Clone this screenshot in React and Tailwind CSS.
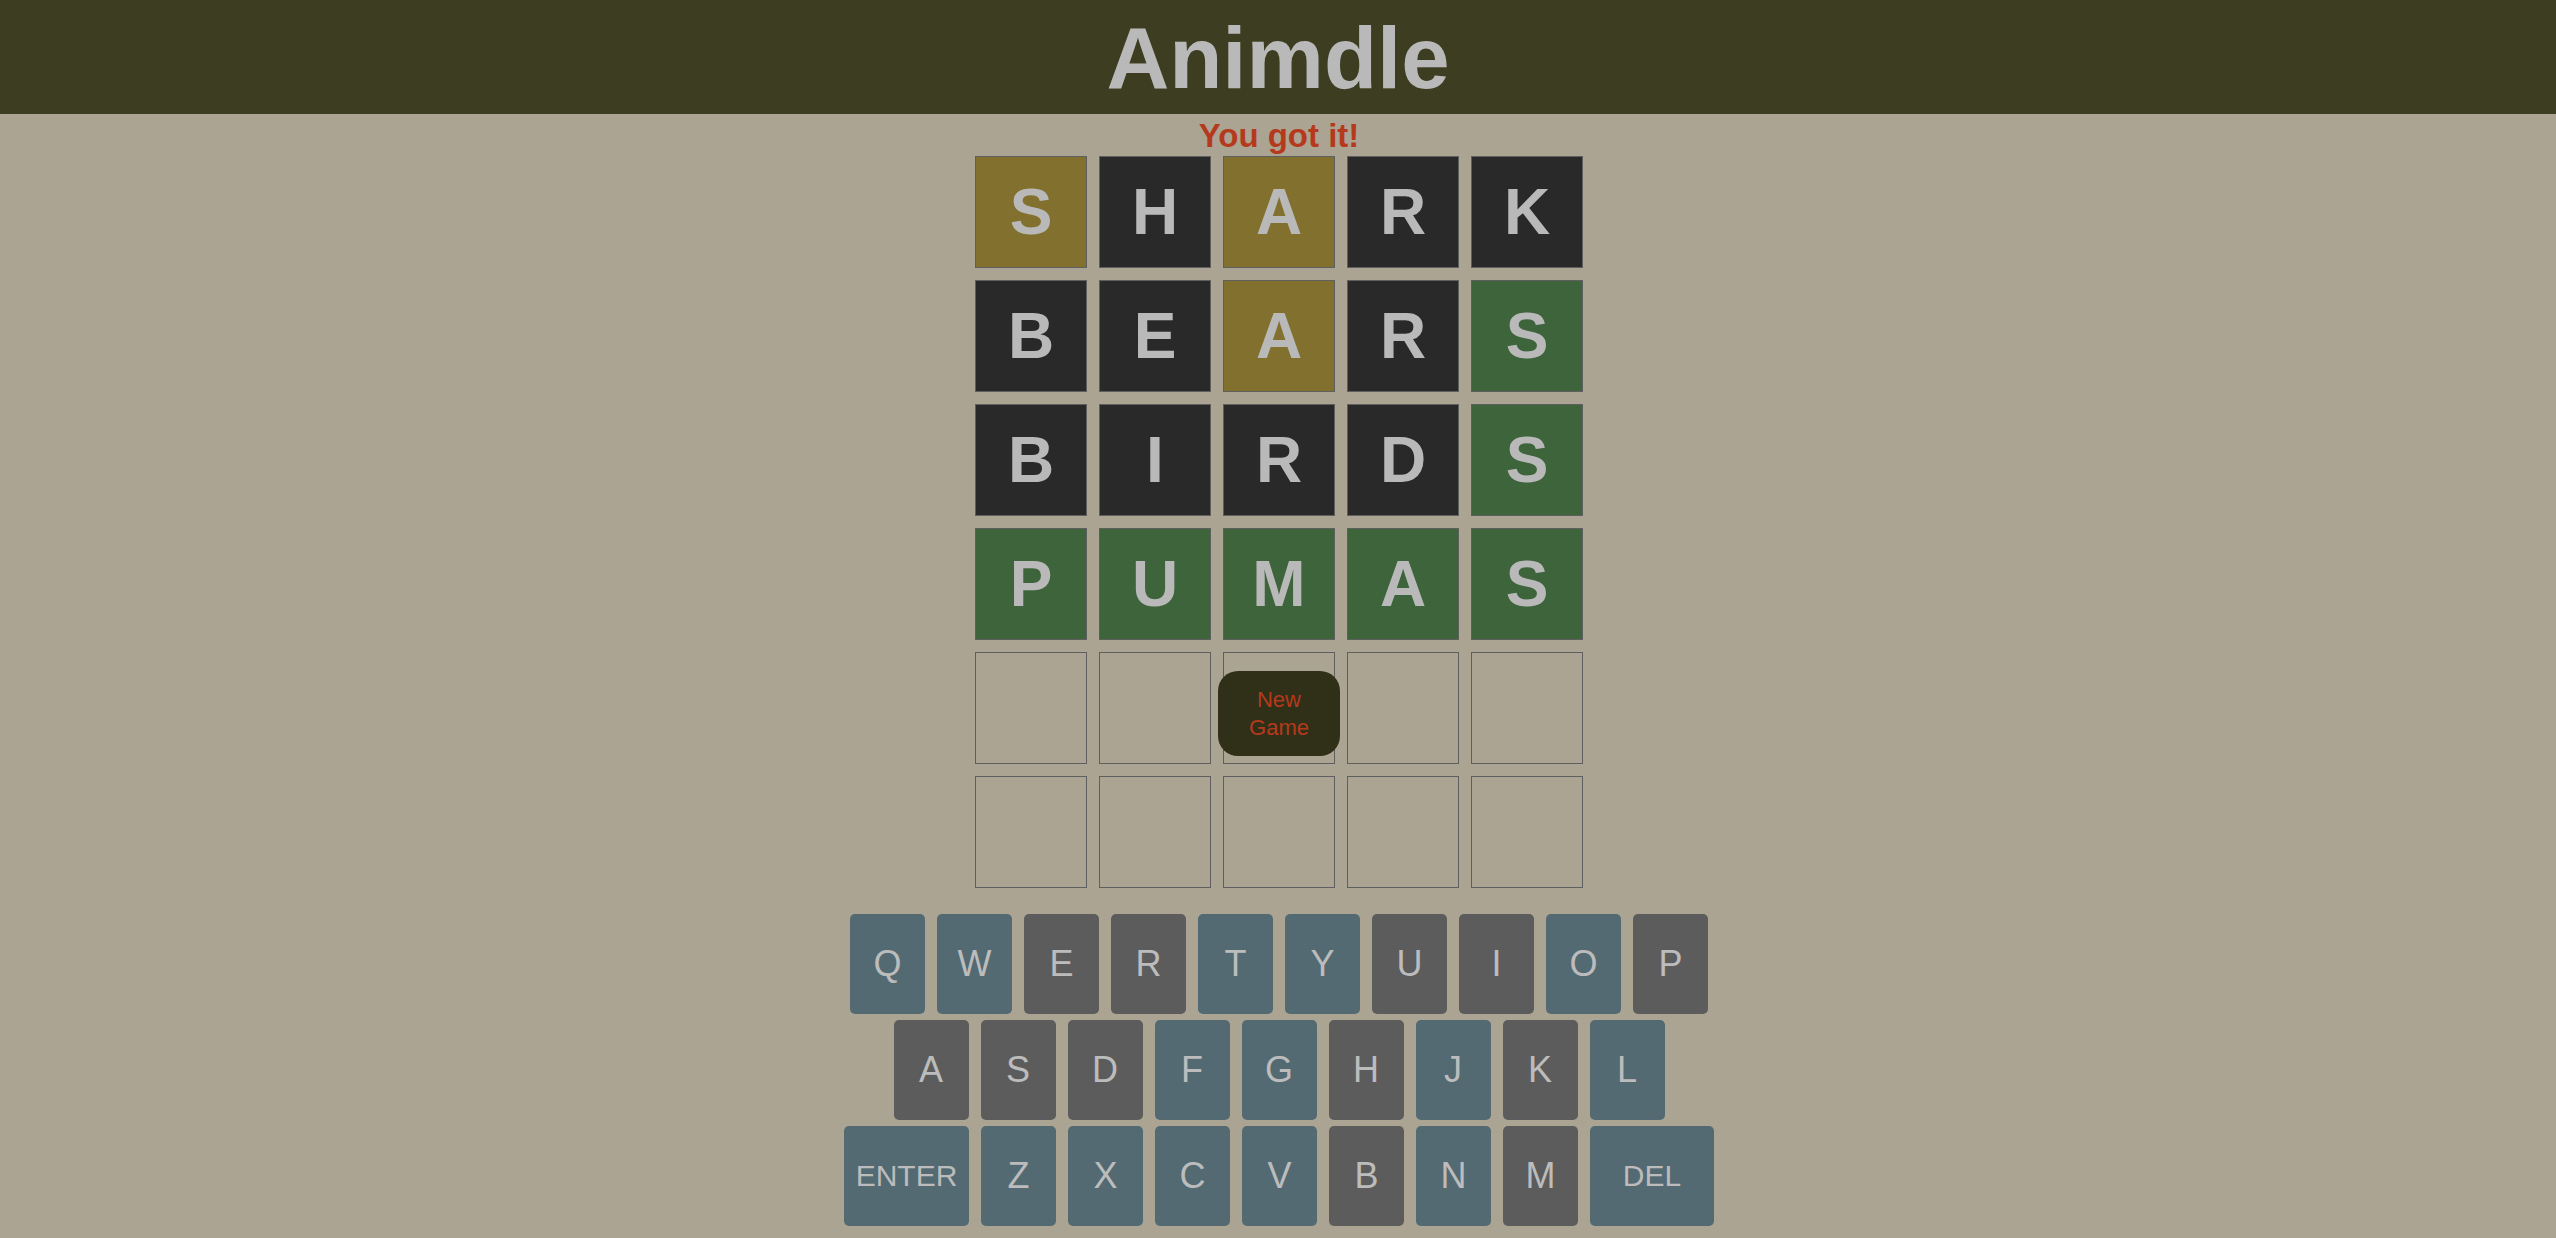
const rows = [
  { word: "SHARK", marks: "ydydd" },
  { word: "BEARS", marks: "ddydg" },
  { word: "BIRDS", marks: "ddddg" },
  { word: "PUMAS", marks: "ggggg" },
  { word: "", marks: "" },
  { word: "", marks: "" },
];

const tileColors = {
  y: "bg-[#82712e]",
  d: "bg-[#292929]",
  g: "bg-[#3d643a]",
};

const keyRows = [
  ["Q", "W", "E", "R", "T", "Y", "U", "I", "O", "P"],
  ["A", "S", "D", "F", "G", "H", "J", "K", "L"],
  ["ENTER", "Z", "X", "C", "V", "B", "N", "M", "DEL"],
];

// letters already tried show up grey, the rest keep the blue
const used = new Set("SHARKBEIDPUM".split(""));

function Tile({ letter, mark, children }) {
  const color = mark ? tileColors[mark] : "bg-transparent";
  return (
    <div
      className={`relative w-[112px] h-[112px] border border-[#5f5f5f] ${color} flex items-center justify-center`}
    >
      <span className="text-[64px] font-bold leading-none text-[#b9b9b9]">
        {letter}
      </span>
      {children}
    </div>
  );
}

function Key({ label }) {
  const wide = label.length > 1;
  const color = wide || !used.has(label) ? "bg-[#536a72]" : "bg-[#5c5c5c]";
  const size =
    label === "ENTER"
      ? "w-[125px] text-[30px]"
      : label === "DEL"
      ? "w-[124px] text-[30px]"
      : "w-[75px] text-[36px]";
  return (
    <button
      className={`${size} h-[100px] rounded-[5px] ${color} text-[#bcbcbc] flex items-center justify-center leading-none`}
    >
      {label}
    </button>
  );
}

export default function App() {
  return (
    <div
      className="min-h-screen bg-[#aca493] flex flex-col"
      style={{ fontFamily: '"Liberation Sans", Arial, sans-serif' }}
    >
      <header className="h-[114px] bg-[#3c3d21] flex items-center justify-center">
        <h1 className="text-[87px] font-bold leading-none text-[#b9b9b9]">
          Animdle
        </h1>
      </header>

      <div className="pl-[2px] flex flex-col">
        <div className="h-[42px] pt-[2px] text-center text-[33px] font-bold leading-[40px] text-[#b53a1d]">
          You got it!
        </div>

        <div className="flex flex-col items-center gap-[12px]">
          {rows.map((row, r) => (
            <div key={r} className="flex gap-[12px]">
              {[0, 1, 2, 3, 4].map((i) => (
                <Tile key={i} letter={row.word[i]} mark={row.marks[i]}>
                  {r === 4 && i === 2 && (
                    <button className="absolute top-[18px] left-1/2 -translate-x-1/2 w-[122px] h-[85px] rounded-[20px] bg-[#303019] px-[14px] text-[22px] leading-[28px] text-[#b5391c]">
                      New Game
                    </button>
                  )}
                </Tile>
              ))}
            </div>
          ))}
        </div>

        <div className="mt-[26px] flex flex-col items-center gap-[6px]">
          {keyRows.map((row, r) => (
            <div key={r} className="flex gap-[12px]">
              {row.map((k) => (
                <Key key={k} label={k} />
              ))}
            </div>
          ))}
        </div>
      </div>
    </div>
  );
}
